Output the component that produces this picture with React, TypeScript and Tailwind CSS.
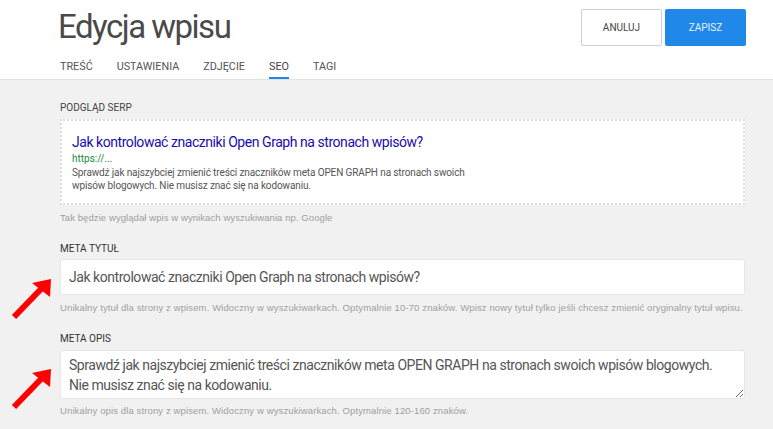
import React from 'react';

const tabs = ['TREŚĆ', 'USTAWIENIA', 'ZDJĘCIE', 'SEO', 'TAGI'];

const metaTitle = 'Jak kontrolować znaczniki Open Graph na stronach wpisów?';
const metaDesc =
  'Sprawdź jak najszybciej zmienić treści znaczników meta OPEN GRAPH na stronach swoich wpisów blogowych.\nNie musisz znać się na kodowaniu.';

function RedArrow({ top }: { top: number }) {
  return (
    <svg
      className="absolute left-0"
      style={{ top }}
      width="60"
      height="64"
      viewBox="0 0 60 64"
    >
      <line x1="42" y1="28" x2="14" y2="57" stroke="#ff0000" strokeWidth="6" />
      <polygon points="51,19 32,23 50,37" fill="#ff0000" />
    </svg>
  );
}

export default function App() {
  return (
    <div className="relative w-[773px] h-[429px] overflow-hidden bg-[#f1f1f1] font-['Roboto',sans-serif]">
      <header className="h-[80px] bg-white border-b border-[#e2e2e2]">
        <div className="flex justify-between pl-[58px] pr-[27px]">
          <div>
            <h1 className="mt-[10px] text-[33px] leading-[34px] tracking-[-1.5px] text-[#4a4a4a]">Edycja wpisu</h1>
            <nav className="mt-[16px] flex gap-[24px] pl-[2px]">
              {tabs.map(t => (
                <a
                  key={t}
                  className={
                    t === 'SEO'
                      ? 'text-[10.8px] leading-[13px] pb-[4px] border-b-2 border-[#1f88e8] text-[#444]'
                      : 'text-[10.8px] leading-[13px] pb-[4px] border-b-2 border-transparent text-[#555]'
                  }
                >
                  {t}
                </a>
              ))}
            </nav>
          </div>
          <div className="mt-[9px] flex gap-[3px] h-[37px]">
            <button className="w-[81px] rounded-[2px] border border-[#cfcfcf] bg-white text-[10px] text-[#444]">
              ANULUJ
            </button>
            <button className="w-[81px] rounded-[2px] bg-[#1f88e8] text-[10px] text-[#e8f2fd]">
              ZAPISZ
            </button>
          </div>
        </div>
      </header>

      <main className="pl-[60px] pr-[28px] pt-[22px]">
        <label className="block text-[10px] leading-[12px] text-[#444]">PODGLĄD SERP</label>
        <div className="mt-[5px] h-[86px] border-2 border-dotted border-[#dcdcdc] bg-white pl-[10px] pt-[12px]">
          <p className="text-[14px] leading-[18px] tracking-[-0.45px] text-[#1a0dab]">{metaTitle}</p>
          <p className="text-[10px] leading-[15px] text-[#1a8a3c]">https://...</p>
          <p className="text-[10px] leading-[13px] tracking-[-0.12px] text-[#555]">
            Sprawdź jak najszybciej zmienić treści znaczników meta OPEN GRAPH na stronach swoich
            <br />
            wpisów blogowych. Nie musisz znać się na kodowaniu.
          </p>
        </div>
        <p className="mt-[7px] font-['Liberation_Sans',sans-serif] text-[9.5px] leading-[12px] tracking-[0.08px] text-[#a0a0a0]">
          Tak będzie wyglądał wpis w wynikach wyszukiwania np. Google
        </p>

        <label className="mt-[19px] block text-[10px] leading-[12px] text-[#333]">META TYTUŁ</label>
        <input
          readOnly
          value={metaTitle}
          className="mt-[4px] block w-full h-[36px] rounded-[3px] border border-[#e6e6e6] bg-white px-[8px] text-[14px] tracking-[-0.45px] text-[#555] outline-none"
        />
        <p className="mt-[7px] font-['Liberation_Sans',sans-serif] text-[9.5px] leading-[12px] tracking-[0.12px] text-[#a0a0a0]">
          Unikalny tytuł dla strony z wpisem. Widoczny w wyszukiwarkach. Optymalnie 10-70 znaków. Wpisz nowy tytuł tylko jeśli chcesz zmienić oryginalny tytuł wpisu.
        </p>

        <label className="mt-[19px] block text-[10px] leading-[12px] text-[#333]">META OPIS</label>
        <textarea
          readOnly
          value={metaDesc}
          className="mt-[5px] block w-full h-[49px] rounded-[3px] border border-[#e6e6e6] bg-white px-[8px] pt-[4px] text-[14px] leading-[20px] tracking-[-0.45px] text-[#555] outline-none"
        />
        <p className="mt-[6px] font-['Liberation_Sans',sans-serif] text-[9.5px] leading-[12px] tracking-[0.12px] text-[#a0a0a0]">
          Unikalny opis dla strony z wpisem. Widoczny w wyszukiwarkach. Optymalnie 120-160 znaków.
        </p>
      </main>

      <RedArrow top={260} />
      <RedArrow top={350} />
    </div>
  );
}
